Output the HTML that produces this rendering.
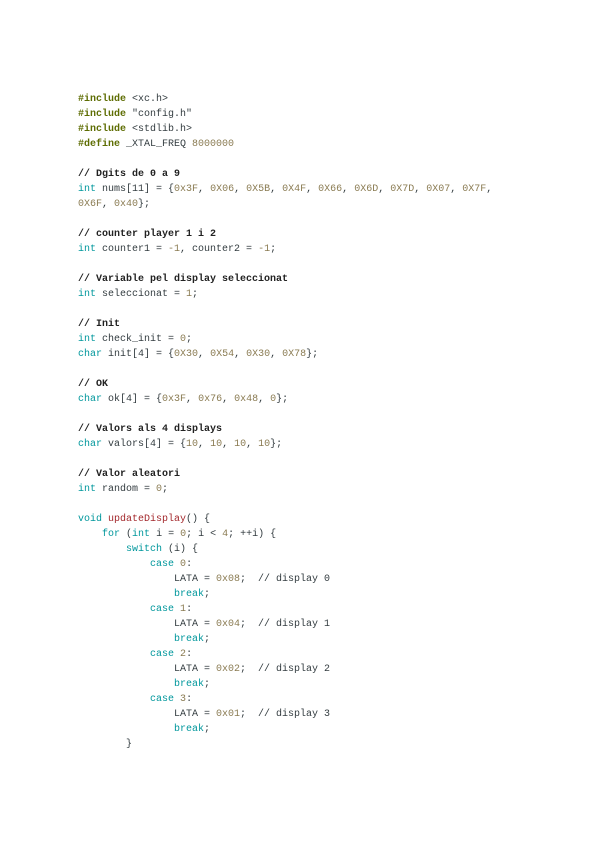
<!DOCTYPE html>
<html><head><meta charset="utf-8"><style>
html,body{margin:0;padding:0;background:#fff;width:600px;height:848px;overflow:hidden}
pre{position:absolute;left:78px;top:92px;margin:0;font-family:"Liberation Mono",monospace;font-size:10px;line-height:15px;color:#333c40}
.p{color:#5e6d03;font-weight:bold}.k{color:#00979c}.n{color:#8a7b52}.f{color:#a3282c}.c{color:#222;font-weight:bold}
</style></head><body><pre><span class="p">#include</span> &lt;xc.h&gt;
<span class="p">#include</span> "config.h"
<span class="p">#include</span> &lt;stdlib.h&gt;
<span class="p">#define</span> _XTAL_FREQ <span class="n">8000000</span>

<span class="c">// Dgits de 0 a 9</span>
<span class="k">int</span> nums[11] = {<span class="n">0x3F</span>, <span class="n">0X06</span>, <span class="n">0X5B</span>, <span class="n">0X4F</span>, <span class="n">0X66</span>, <span class="n">0X6D</span>, <span class="n">0X7D</span>, <span class="n">0X07</span>, <span class="n">0X7F</span>,
<span class="n">0X6F</span>, <span class="n">0x40</span>};

<span class="c">// counter player 1 i 2</span>
<span class="k">int</span> counter1 = <span class="n">-1</span>, counter2 = <span class="n">-1</span>;

<span class="c">// Variable pel display seleccionat</span>
<span class="k">int</span> seleccionat = <span class="n">1</span>;

<span class="c">// Init</span>
<span class="k">int</span> check_init = <span class="n">0</span>;
<span class="k">char</span> init[4] = {<span class="n">0X30</span>, <span class="n">0X54</span>, <span class="n">0X30</span>, <span class="n">0X78</span>};

<span class="c">// OK</span>
<span class="k">char</span> ok[4] = {<span class="n">0x3F</span>, <span class="n">0x76</span>, <span class="n">0x48</span>, <span class="n">0</span>};

<span class="c">// Valors als 4 displays</span>
<span class="k">char</span> valors[4] = {<span class="n">10</span>, <span class="n">10</span>, <span class="n">10</span>, <span class="n">10</span>};

<span class="c">// Valor aleatori</span>
<span class="k">int</span> random = <span class="n">0</span>;

<span class="k">void</span> <span class="f">updateDisplay</span>() {
    <span class="k">for</span> (<span class="k">int</span> i = <span class="n">0</span>; i &lt; <span class="n">4</span>; ++i) {
        <span class="k">switch</span> (i) {
            <span class="k">case</span> <span class="n">0</span>:
                LATA = <span class="n">0x08</span>;  // display 0
                <span class="k">break</span>;
            <span class="k">case</span> <span class="n">1</span>:
                LATA = <span class="n">0x04</span>;  // display 1
                <span class="k">break</span>;
            <span class="k">case</span> <span class="n">2</span>:
                LATA = <span class="n">0x02</span>;  // display 2
                <span class="k">break</span>;
            <span class="k">case</span> <span class="n">3</span>:
                LATA = <span class="n">0x01</span>;  // display 3
                <span class="k">break</span>;
        }
</pre></body></html>
